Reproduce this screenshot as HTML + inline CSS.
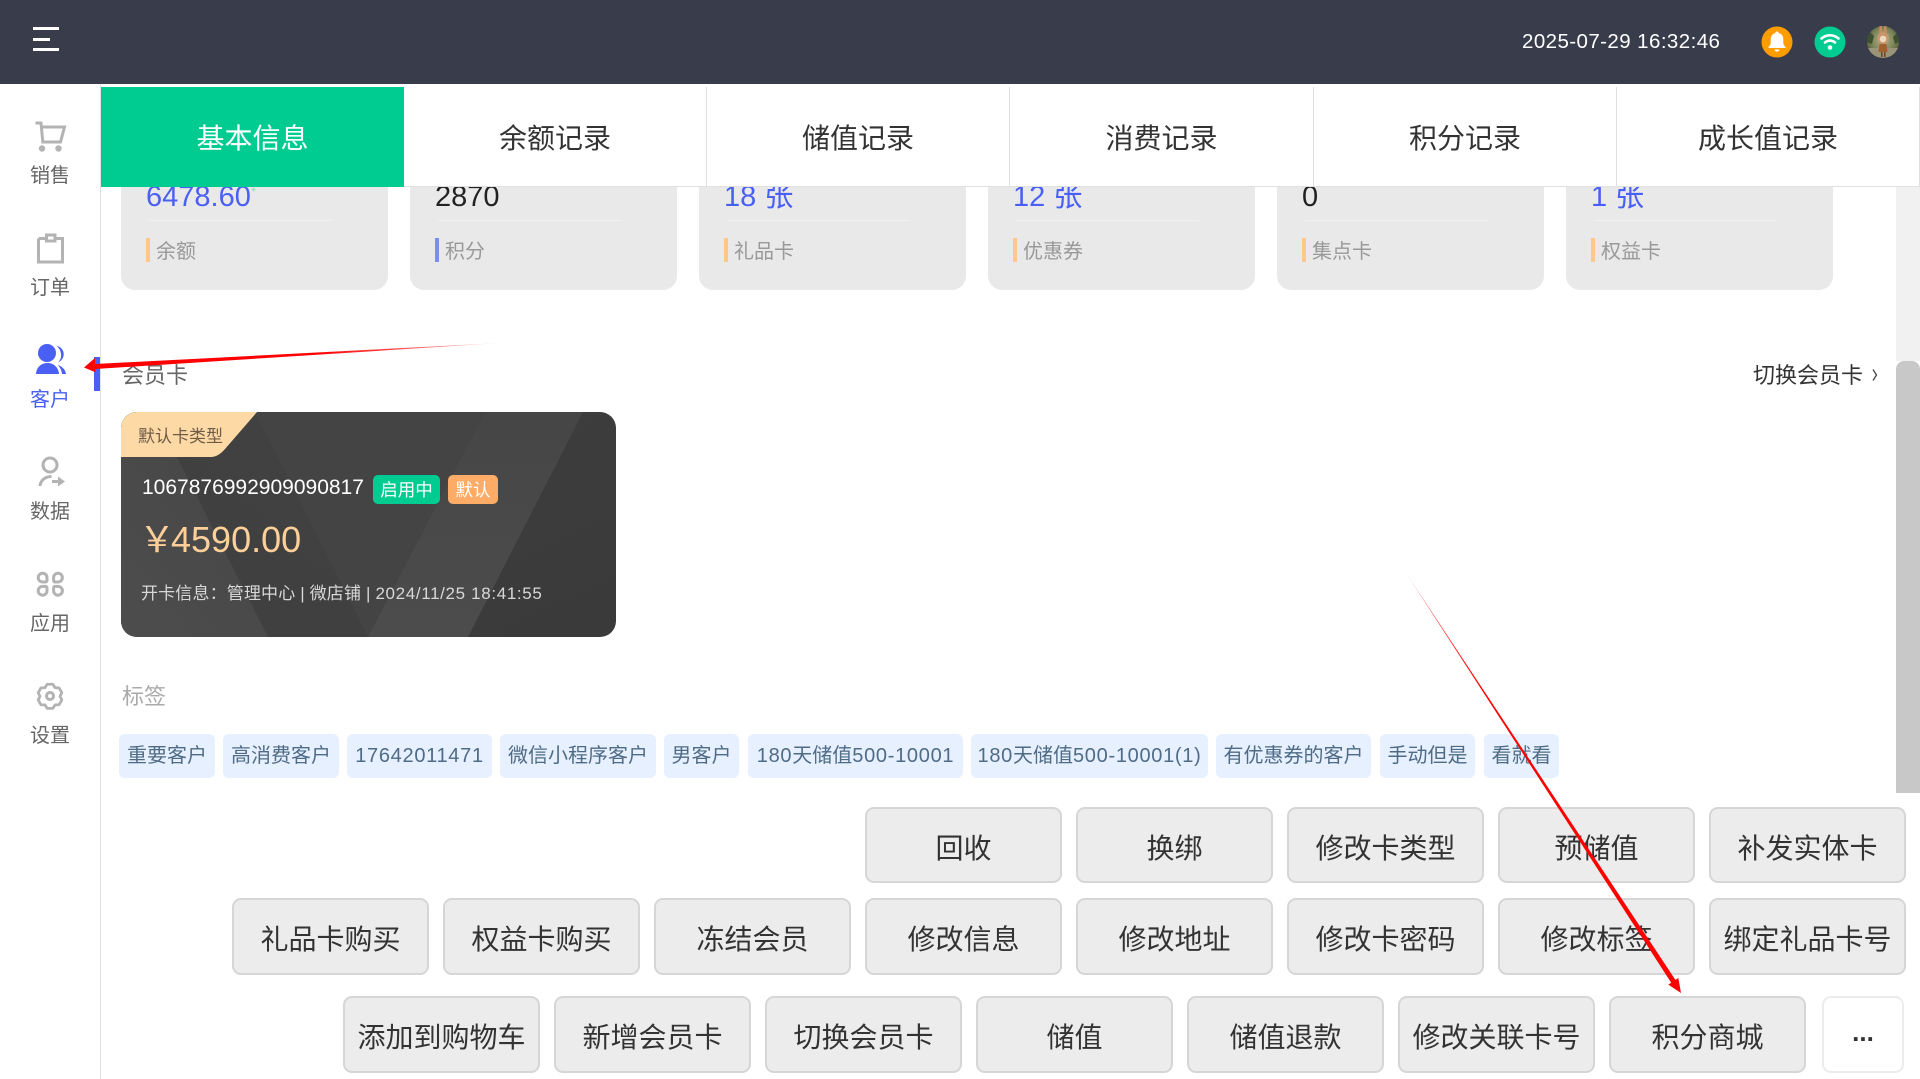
<!DOCTYPE html>
<html lang="zh-CN">
<head>
<meta charset="utf-8">
<title>客户详情</title>
<style>
html,body{margin:0;padding:0;background:#fff}
body{position:relative;width:1920px;height:1079px;overflow:hidden;font-family:"Liberation Sans","Noto Sans CJK SC",sans-serif;color:#333}
.a{position:absolute;white-space:nowrap}
.tab{position:absolute;top:87px;height:99px;width:303px;border-right:1px solid #e0e0e0;border-bottom:1px solid #e0e0e0;background:#fff;text-align:center;line-height:103px;font-size:28px;color:#333;z-index:5}
.side{position:absolute;left:0;width:100px;text-align:center;font-size:20px;line-height:32px;height:32px;color:#666}
.card{position:absolute;top:150px;width:267px;height:140px;background:#e9e9e9;border-radius:14px}
.val{position:absolute;left:25px;top:29px;font-size:29px;line-height:36px;white-space:nowrap}
.blue{color:#4a60f5}
.div{position:absolute;left:28px;top:70px;width:183px;height:1px;background:#f0f0f0}
.bar{position:absolute;left:25px;top:88px;width:4px;height:24px;background:#ffc78a}
.lab{position:absolute;left:35px;top:87px;font-size:20px;line-height:30px;color:#999;white-space:nowrap}
.tag{position:absolute;top:734px;height:44px;background:#e6f0ff;border-radius:6px;text-align:center;line-height:45px;font-size:20px;color:#4f6b85;white-space:nowrap}
.tag span{letter-spacing:.7px}
.btn{position:absolute;width:197px;box-sizing:border-box;background:#ececec;border:2px solid #d6d6d6;border-radius:9px;text-align:center;font-size:28px;color:#333;white-space:nowrap}
.r1{top:807px;height:76px;line-height:80px}
.r2{top:898px;height:77px;line-height:79px}
.r3{top:996px;height:77px;line-height:79px}
</style>
</head>
<body>
<!-- header -->
<div class="a" style="left:0;top:0;width:1920px;height:84px;background:#393c4b"></div>
<div class="a" style="left:33px;top:27px;width:26px;height:3px;background:#fff"></div>
<div class="a" style="left:33px;top:38px;width:17px;height:3px;background:#fff"></div>
<div class="a" style="left:33px;top:48px;width:26px;height:3px;background:#fff"></div>
<div class="a" style="left:1522px;top:27px;font-size:20.5px;line-height:30px;color:#fff;letter-spacing:.42px">2025-07-29 16:32:46</div>

<svg class="a" style="left:1750px;top:15px" width="160" height="55" viewBox="1750 15 160 55">
  <circle cx="1777" cy="42" r="15.5" fill="#ff9d00"/>
  <path d="M1777 31.5c1 0 1.6.7 1.7 1.5 3 .8 4.6 3.3 4.6 6.6v3.6c0 1.5 1 2.6 2.2 3.7v1.1h-17v-1.100c1.200-1.100 2.200-2.200 2.200-3.700v-3.600c0-3.300 1.600-5.800 4.600-6.600.1-.8.700-1.500 1.700-1.500z" fill="#fff"/>
  <path d="M1774.500 49.500h5c-.2 1.300-1.200 2.100-2.500 2.100s-2.300-.8-2.500-2.100z" fill="#fff"/>
  <circle cx="1830" cy="42" r="15.500" fill="#00cc92"/>
  <path d="M1821.500 38.500c4.800-4.300 12.200-4.300 17 0M1825 42.500c3-2.600 7-2.600 10 0" fill="none" stroke="#fff" stroke-width="2.600" stroke-linecap="round"/>
  <circle cx="1830" cy="47.500" r="2.300" fill="#fff"/>
  <defs>
    <radialGradient id="av" cx="50%" cy="45%" r="60%"><stop offset="0" stop-color="#b5b08c"/><stop offset=".6" stop-color="#7b8458"/><stop offset="1" stop-color="#4f5236"/></radialGradient>
    <clipPath id="avc"><circle cx="1883" cy="42" r="16"/></clipPath>
  </defs>
  <circle cx="1883" cy="42" r="16" fill="url(#av)"/>
  <g clip-path="url(#avc)">
    <path d="M1867 48h32v10h-32z" fill="#9a9478"/>
    <path d="M1868 30l6 6-2 8-6-2zM1898 32l-5 5 2 7 6-3z" fill="#3f5030"/>
    <path d="M1879.500 26h2.500l.5 8h-3.500zM1884 26h2.500l.5 8h-3.500z" fill="#c48d60"/>
    <circle cx="1883" cy="38" r="5.800" fill="#c9966c"/>
    <circle cx="1883" cy="39" r="3.300" fill="#efd8c0"/>
    <path d="M1879.500 44h7l1 8h-9z" fill="#a0602f"/>
    <path d="M1881 52h1.500v5h-1.500zM1884 52h1.500v5h-1.500z" fill="#6e4524"/>
  </g>
</svg>

<!-- sidebar -->
<div class="a" style="left:100px;top:84px;width:1px;height:995px;background:#e0e0e0"></div>
<svg class="a" style="left:0;top:84px" width="100" height="660" viewBox="0 84 100 660">
  <g fill="none" stroke="#b3b3b3" stroke-width="3">
    <path d="M35.500 123h5.500l1.800 19h17.700l4-15H42"/>
    <path d="M38.500 238.500h8M55 238.500h7.500v23.500h-24v-23.500"/>
    <path d="M46.500 235h8.500v6h-8.500z"/>
    <circle cx="50" cy="465" r="7"/>
    <path d="M40 486c.5-5.500 5-9.500 11.500-9.500"/>
    <g id="petal">
      <path d="M47 577.600V580.500a1.500 1.500 0 0 1-1.500 1.500H42.900A4.400 4.400 0 1 1 47 577.600z"/>
    </g>
    <path transform="translate(100.600 0) scale(-1 1)" d="M47 577.600V580.500a1.500 1.500 0 0 1-1.500 1.500H42.900A4.400 4.400 0 1 1 47 577.600z"/>
    <path transform="translate(0 1168.400) scale(1 -1)" d="M47 577.600V580.500a1.500 1.500 0 0 1-1.500 1.500H42.900A4.400 4.400 0 1 1 47 577.600z"/>
    <path transform="translate(100.600 1168.400) scale(-1 -1)" d="M47 577.600V580.500a1.500 1.500 0 0 1-1.500 1.500H42.900A4.400 4.400 0 1 1 47 577.600z"/>
    <path transform="translate(50 696.300) scale(.93) translate(-50 -696.300)" stroke-linejoin="round" d="M47 683.300L53 683.300 55.400 687 59.700 687.200 62.700 692.400 60.800 696.300 62.700 700.200 59.700 705.400 55.400 705.600 53 709.300 47 709.300 44.600 705.600 40.300 705.400 37.300 700.200 39.200 696.300 37.300 692.400 40.300 687.200 44.600 687z"/>
    <circle cx="50" cy="696" r="3.500"/>
  </g>
  <g fill="#b3b3b3">
    <circle cx="42" cy="148.500" r="3.200"/>
    <circle cx="58.500" cy="148.500" r="3.200"/>
    <path d="M52 480h6v-3.500l7 5-7 5V483h-6z"/>
  </g>
  <g fill="#4a60f5">
    <circle cx="47" cy="353" r="9"/>
    <path d="M36 374c.3-6.500 5-11 11.500-11 6.300 0 11 4.500 11.500 11z"/>
    <path d="M56 345.500c6 1.500 8.500 6 7.500 10.500-.7 3-2.500 5-5 6 2-2.500 3-5 2.500-8-.4-3.300-2-6.500-5-8.500z"/>
    <path d="M58 365c4.500 1.500 7.500 5 8 9h-4c-.3-3.500-2-6.500-4-9z"/>
  </g>
</svg>
<div class="side" style="top:160px">销售</div>
<div class="side" style="top:272px">订单</div>
<div class="side blue" style="top:384px;color:#4a60f5">客户</div>
<div class="side" style="top:496px">数据</div>
<div class="side" style="top:608px">应用</div>
<div class="side" style="top:720px">设置</div>
<div class="a" style="left:94px;top:357px;width:6px;height:34px;background:#4a60f5"></div>

<!-- stat cards -->
<div class="card" style="left:121px"><div class="val blue">6478.60</div><div class="div"></div><div class="bar"></div><div class="lab">余额</div></div>
<div class="a" style="left:252px;top:188px;width:3px;height:3px;background:#9fdfcb;transform:rotate(45deg)"></div>
<div class="card" style="left:410px"><div class="val" style="color:#222">2870</div><div class="div"></div><div class="bar" style="background:#7b8ff0"></div><div class="lab">积分</div></div>
<div class="card" style="left:699px"><div class="val blue">18 张</div><div class="div"></div><div class="bar"></div><div class="lab">礼品卡</div></div>
<div class="card" style="left:988px"><div class="val blue">12 张</div><div class="div"></div><div class="bar"></div><div class="lab">优惠券</div></div>
<div class="card" style="left:1277px"><div class="val" style="color:#222">0</div><div class="div"></div><div class="bar"></div><div class="lab">集点卡</div></div>
<div class="card" style="left:1566px"><div class="val blue">1 张</div><div class="div"></div><div class="bar"></div><div class="lab">权益卡</div></div>

<!-- tabs -->
<div class="a" style="left:101px;top:84px;width:1819px;height:3px;background:#fff;z-index:5"></div>
<div class="tab" style="left:101px;width:303px;height:100px;background:#00cc92;color:#fff;border:0;line-height:104px">基本信息</div>
<div class="tab" style="left:404px;width:302px">余额记录</div>
<div class="tab" style="left:707px;width:302px">储值记录</div>
<div class="tab" style="left:1010px;width:303px">消费记录</div>
<div class="tab" style="left:1314px;width:302px">积分记录</div>
<div class="tab" style="left:1617px;width:302px">成长值记录</div>

<!-- scrollbar -->
<div class="a" style="left:1896px;top:187px;width:24px;height:174px;background:#f1f1f1"></div>
<div class="a" style="left:1896px;top:361px;width:24px;height:432px;background:#c8c8c8;border-radius:8px 8px 0 0"></div>

<!-- member card -->
<div class="a" style="left:122px;top:359px;font-size:22px;line-height:34px;color:#666">会员卡</div>
<div class="a" style="left:1753px;top:359px;font-size:22px;line-height:34px;color:#333">切换会员卡</div>
<svg class="a" style="left:1871px;top:368px" width="8" height="14" viewBox="0 0 8 14"><path d="M2 1.500L5.500 7 2 12.500" fill="none" stroke="#444" stroke-width="1.300"/></svg>

<svg class="a" style="left:121px;top:412px" width="495" height="225" viewBox="0 0 495 225">
  <defs>
    <clipPath id="cc"><rect width="495" height="225" rx="16"/></clipPath>
    <linearGradient id="bd" x1="0" y1="0" x2="0" y2="1"><stop offset="0" stop-color="#464646"/><stop offset="1" stop-color="#4c4c4c"/></linearGradient>
    <linearGradient id="rt" x1="0" y1="0" x2="1" y2="1"><stop offset="0" stop-color="#3f3f3f"/><stop offset="1" stop-color="#3a3a3a"/></linearGradient>
    <linearGradient id="lf" x1="1" y1="0" x2="0" y2="1"><stop offset="0" stop-color="#424242"/><stop offset="1" stop-color="#3f3f3f"/></linearGradient>
    <linearGradient id="ll" x1="1" y1="0" x2="0" y2="1"><stop offset="0" stop-color="#464646"/><stop offset="1" stop-color="#4d4d4d"/></linearGradient>
  </defs>
  <g clip-path="url(#cc)">
    <rect width="495" height="225" fill="url(#rt)"/>
    <path d="M0 0H134L247 225H147L56 45H0z" fill="url(#lf)"/>
    <path d="M0 45H56L147 225H0z" fill="url(#ll)"/>
    <path d="M134 0H364L247 225z" fill="#444"/>
    <path d="M364 0H462L347 225H247z" fill="url(#bd)"/>
    <path d="M0 0H136L104 37Q97 45 90 45H0z" fill="#fdd9a5"/>
  </g>
</svg>
<div class="a" style="left:138px;top:423px;font-size:17px;line-height:28px;color:#6e5c47">默认卡类型</div>
<div class="a" style="left:142px;top:473px;font-size:21px;line-height:30px;color:#fff;letter-spacing:0">1067876992909090817</div>
<div class="a" style="left:373px;top:475px;width:67px;height:29px;background:#00cc92;border-radius:5px;text-align:center;line-height:31px;font-size:17.500px;color:#fff">启用中</div>
<div class="a" style="left:448px;top:475px;width:50px;height:29px;background:#fdac68;border-radius:5px;text-align:center;line-height:31px;font-size:17.500px;color:#fff">默认</div>
<div class="a" style="left:139px;top:517px;font-size:36px;line-height:46px;color:#fdd09a">￥</div>
<div class="a" style="left:171px;top:517px;font-size:36px;line-height:46px;color:#fdd09a;letter-spacing:0">4590.00</div>
<div class="a" style="left:141px;top:581px;font-size:17px;line-height:26px;color:#d8d8d8;letter-spacing:.15px">开卡信息：管理中心 | 微店铺 | <span style="letter-spacing:.65px">2024/11/25 18:41:55</span></div>

<!-- tags -->
<div class="a" style="left:122px;top:680px;font-size:22px;line-height:34px;color:#aaa">标签</div>
<div class="tag" style="left:119px;width:96px">重要客户</div>
<div class="tag" style="left:223px;width:116px">高消费客户</div>
<div class="tag" style="left:347px;width:145px"><span>17642011471</span></div>
<div class="tag" style="left:500px;width:156px">微信小程序客户</div>
<div class="tag" style="left:664px;width:75px">男客户</div>
<div class="tag" style="left:748px;width:215px"><span>180</span>天储值<span>500-10001</span></div>
<div class="tag" style="left:971px;width:237px"><span>180</span>天储值<span>500-10001(1)</span></div>
<div class="tag" style="left:1216px;width:155px">有优惠券的客户</div>
<div class="tag" style="left:1380px;width:95px">手动但是</div>
<div class="tag" style="left:1484px;width:75px">看就看</div>

<!-- buttons -->
<div class="btn r1" style="left:865px">回收</div>
<div class="btn r1" style="left:1076px">换绑</div>
<div class="btn r1" style="left:1287px">修改卡类型</div>
<div class="btn r1" style="left:1498px">预储值</div>
<div class="btn r1" style="left:1709px">补发实体卡</div>

<div class="btn r2" style="left:232px">礼品卡购买</div>
<div class="btn r2" style="left:443px">权益卡购买</div>
<div class="btn r2" style="left:654px">冻结会员</div>
<div class="btn r2" style="left:865px">修改信息</div>
<div class="btn r2" style="left:1076px">修改地址</div>
<div class="btn r2" style="left:1287px">修改卡密码</div>
<div class="btn r2" style="left:1498px">修改标签</div>
<div class="btn r2" style="left:1709px">绑定礼品卡号</div>

<div class="btn r3" style="left:343px">添加到购物车</div>
<div class="btn r3" style="left:554px">新增会员卡</div>
<div class="btn r3" style="left:765px">切换会员卡</div>
<div class="btn r3" style="left:976px">储值</div>
<div class="btn r3" style="left:1187px">储值退款</div>
<div class="btn r3" style="left:1398px">修改关联卡号</div>
<div class="btn r3" style="left:1609px">积分商城</div>
<div class="btn r3" style="left:1822px;width:82px;background:#fff;border-color:#ececec;font-weight:bold;font-size:26px;line-height:68px">...</div>

<!-- annotation arrows -->
<svg class="a" style="left:0;top:0;z-index:10;pointer-events:none" width="1920" height="1079" viewBox="0 0 1920 1079">
  <defs>
    <linearGradient id="g1" gradientUnits="userSpaceOnUse" x1="500" y1="343" x2="84" y2="367"><stop offset="0" stop-color="#f00" stop-opacity=".1"/><stop offset=".25" stop-color="#f33" stop-opacity=".9"/><stop offset=".45" stop-color="#f00"/><stop offset="1" stop-color="#f00"/></linearGradient>
    <linearGradient id="g2" gradientUnits="userSpaceOnUse" x1="1406" y1="573" x2="1681" y2="993"><stop offset="0" stop-color="#f00" stop-opacity=".3"/><stop offset=".08" stop-color="#f33" stop-opacity=".9"/><stop offset=".3" stop-color="#f00"/><stop offset="1" stop-color="#f00"/></linearGradient>
  </defs>
  <path d="M500 343L95 369l1 3.500-12-5 11-9.500v6z" fill="url(#g1)"/>
  <path d="M1406 573L1675.400 979.900l2.900-1.900 2.700 15-12.700-8.400 2.900-1.900z" fill="url(#g2)"/>
</svg>
</body>
</html>
